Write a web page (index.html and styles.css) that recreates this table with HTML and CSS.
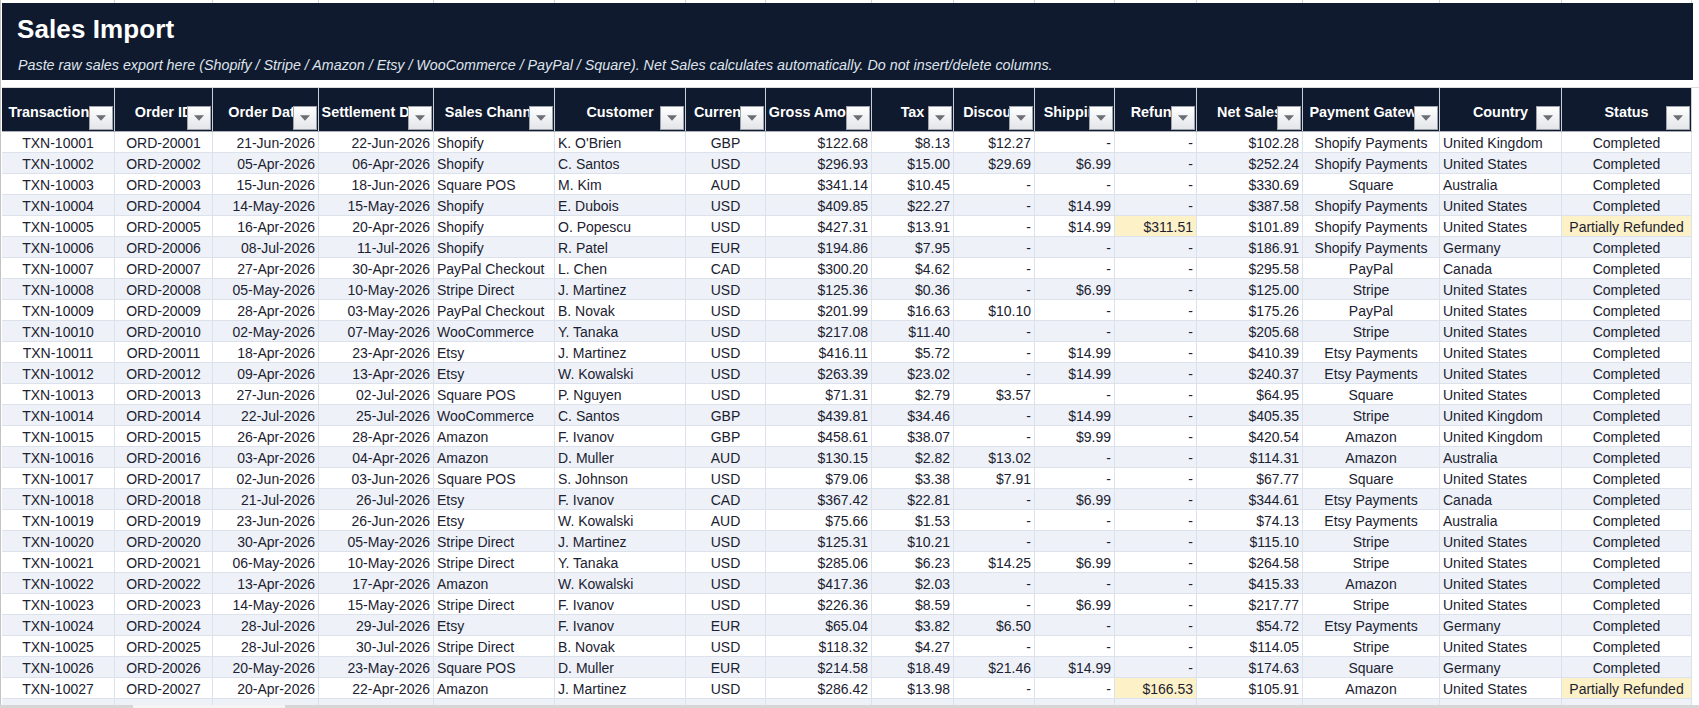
FILE: index.html
```html
<!DOCTYPE html>
<html lang="en">
<head>
<meta charset="utf-8">
<title>Sales Import</title>
<link rel="stylesheet" href="styles.css">
</head>
<body>
<div class="sheet">
  <div class="top-strip">
    <span></span><span></span><span></span><span></span><span></span><span></span><span></span><span></span><span></span><span></span><span></span><span></span><span></span><span></span><span></span><span></span>
  </div>
  <header class="banner">
    <h1 class="title">Sales Import</h1>
    <p class="subtitle">Paste raw sales export here (Shopify / Stripe / Amazon / Etsy / WooCommerce / PayPal / Square). Net Sales calculates automatically. Do not insert/delete columns.</p>
  </header>
  <div class="gap-strip"></div>
  <div class="grid">
    <div class="row head">
      <div class="hc"><span>Transaction ID</span><i class="fb"><svg viewBox="0 0 9 5"><polygon points="0,0 9,0 4.5,5"/></svg></i></div>
      <div class="hc"><span>Order ID</span><i class="fb"><svg viewBox="0 0 9 5"><polygon points="0,0 9,0 4.5,5"/></svg></i></div>
      <div class="hc"><span>Order Date</span><i class="fb"><svg viewBox="0 0 9 5"><polygon points="0,0 9,0 4.5,5"/></svg></i></div>
      <div class="hc"><span>Settlement Date</span><i class="fb"><svg viewBox="0 0 9 5"><polygon points="0,0 9,0 4.5,5"/></svg></i></div>
      <div class="hc"><span>Sales Channel</span><i class="fb"><svg viewBox="0 0 9 5"><polygon points="0,0 9,0 4.5,5"/></svg></i></div>
      <div class="hc"><span>Customer</span><i class="fb"><svg viewBox="0 0 9 5"><polygon points="0,0 9,0 4.5,5"/></svg></i></div>
      <div class="hc"><span>Currency</span><i class="fb"><svg viewBox="0 0 9 5"><polygon points="0,0 9,0 4.5,5"/></svg></i></div>
      <div class="hc"><span>Gross Amount</span><i class="fb"><svg viewBox="0 0 9 5"><polygon points="0,0 9,0 4.5,5"/></svg></i></div>
      <div class="hc"><span>Tax</span><i class="fb"><svg viewBox="0 0 9 5"><polygon points="0,0 9,0 4.5,5"/></svg></i></div>
      <div class="hc"><span>Discount</span><i class="fb"><svg viewBox="0 0 9 5"><polygon points="0,0 9,0 4.5,5"/></svg></i></div>
      <div class="hc"><span>Shipping</span><i class="fb"><svg viewBox="0 0 9 5"><polygon points="0,0 9,0 4.5,5"/></svg></i></div>
      <div class="hc"><span>Refund</span><i class="fb"><svg viewBox="0 0 9 5"><polygon points="0,0 9,0 4.5,5"/></svg></i></div>
      <div class="hc"><span>Net Sales</span><i class="fb"><svg viewBox="0 0 9 5"><polygon points="0,0 9,0 4.5,5"/></svg></i></div>
      <div class="hc"><span>Payment Gateway</span><i class="fb"><svg viewBox="0 0 9 5"><polygon points="0,0 9,0 4.5,5"/></svg></i></div>
      <div class="hc"><span>Country</span><i class="fb"><svg viewBox="0 0 9 5"><polygon points="0,0 9,0 4.5,5"/></svg></i></div>
      <div class="hc"><span>Status</span><i class="fb"><svg viewBox="0 0 9 5"><polygon points="0,0 9,0 4.5,5"/></svg></i></div>
    </div>
    <div class="body">
      <div class="row"><div class="c">TXN-10001</div><div class="c">ORD-20001</div><div class="r">21-Jun-2026</div><div class="r">22-Jun-2026</div><div class="l">Shopify</div><div class="l">K. O'Brien</div><div class="c">GBP</div><div class="r">$122.68</div><div class="r">$8.13</div><div class="r">$12.27</div><div class="r">-</div><div class="r">-</div><div class="r">$102.28</div><div class="c">Shopify Payments</div><div class="l">United Kingdom</div><div class="c">Completed</div></div>
      <div class="row"><div class="c">TXN-10002</div><div class="c">ORD-20002</div><div class="r">05-Apr-2026</div><div class="r">06-Apr-2026</div><div class="l">Shopify</div><div class="l">C. Santos</div><div class="c">USD</div><div class="r">$296.93</div><div class="r">$15.00</div><div class="r">$29.69</div><div class="r">$6.99</div><div class="r">-</div><div class="r">$252.24</div><div class="c">Shopify Payments</div><div class="l">United States</div><div class="c">Completed</div></div>
      <div class="row"><div class="c">TXN-10003</div><div class="c">ORD-20003</div><div class="r">15-Jun-2026</div><div class="r">18-Jun-2026</div><div class="l">Square POS</div><div class="l">M. Kim</div><div class="c">AUD</div><div class="r">$341.14</div><div class="r">$10.45</div><div class="r">-</div><div class="r">-</div><div class="r">-</div><div class="r">$330.69</div><div class="c">Square</div><div class="l">Australia</div><div class="c">Completed</div></div>
      <div class="row"><div class="c">TXN-10004</div><div class="c">ORD-20004</div><div class="r">14-May-2026</div><div class="r">15-May-2026</div><div class="l">Shopify</div><div class="l">E. Dubois</div><div class="c">USD</div><div class="r">$409.85</div><div class="r">$22.27</div><div class="r">-</div><div class="r">$14.99</div><div class="r">-</div><div class="r">$387.58</div><div class="c">Shopify Payments</div><div class="l">United States</div><div class="c">Completed</div></div>
      <div class="row"><div class="c">TXN-10005</div><div class="c">ORD-20005</div><div class="r">16-Apr-2026</div><div class="r">20-Apr-2026</div><div class="l">Shopify</div><div class="l">O. Popescu</div><div class="c">USD</div><div class="r">$427.31</div><div class="r">$13.91</div><div class="r">-</div><div class="r">$14.99</div><div class="r hl">$311.51</div><div class="r">$101.89</div><div class="c">Shopify Payments</div><div class="l">United States</div><div class="c hl">Partially Refunded</div></div>
      <div class="row"><div class="c">TXN-10006</div><div class="c">ORD-20006</div><div class="r">08-Jul-2026</div><div class="r">11-Jul-2026</div><div class="l">Shopify</div><div class="l">R. Patel</div><div class="c">EUR</div><div class="r">$194.86</div><div class="r">$7.95</div><div class="r">-</div><div class="r">-</div><div class="r">-</div><div class="r">$186.91</div><div class="c">Shopify Payments</div><div class="l">Germany</div><div class="c">Completed</div></div>
      <div class="row"><div class="c">TXN-10007</div><div class="c">ORD-20007</div><div class="r">27-Apr-2026</div><div class="r">30-Apr-2026</div><div class="l">PayPal Checkout</div><div class="l">L. Chen</div><div class="c">CAD</div><div class="r">$300.20</div><div class="r">$4.62</div><div class="r">-</div><div class="r">-</div><div class="r">-</div><div class="r">$295.58</div><div class="c">PayPal</div><div class="l">Canada</div><div class="c">Completed</div></div>
      <div class="row"><div class="c">TXN-10008</div><div class="c">ORD-20008</div><div class="r">05-May-2026</div><div class="r">10-May-2026</div><div class="l">Stripe Direct</div><div class="l">J. Martinez</div><div class="c">USD</div><div class="r">$125.36</div><div class="r">$0.36</div><div class="r">-</div><div class="r">$6.99</div><div class="r">-</div><div class="r">$125.00</div><div class="c">Stripe</div><div class="l">United States</div><div class="c">Completed</div></div>
      <div class="row"><div class="c">TXN-10009</div><div class="c">ORD-20009</div><div class="r">28-Apr-2026</div><div class="r">03-May-2026</div><div class="l">PayPal Checkout</div><div class="l">B. Novak</div><div class="c">USD</div><div class="r">$201.99</div><div class="r">$16.63</div><div class="r">$10.10</div><div class="r">-</div><div class="r">-</div><div class="r">$175.26</div><div class="c">PayPal</div><div class="l">United States</div><div class="c">Completed</div></div>
      <div class="row"><div class="c">TXN-10010</div><div class="c">ORD-20010</div><div class="r">02-May-2026</div><div class="r">07-May-2026</div><div class="l">WooCommerce</div><div class="l">Y. Tanaka</div><div class="c">USD</div><div class="r">$217.08</div><div class="r">$11.40</div><div class="r">-</div><div class="r">-</div><div class="r">-</div><div class="r">$205.68</div><div class="c">Stripe</div><div class="l">United States</div><div class="c">Completed</div></div>
      <div class="row"><div class="c">TXN-10011</div><div class="c">ORD-20011</div><div class="r">18-Apr-2026</div><div class="r">23-Apr-2026</div><div class="l">Etsy</div><div class="l">J. Martinez</div><div class="c">USD</div><div class="r">$416.11</div><div class="r">$5.72</div><div class="r">-</div><div class="r">$14.99</div><div class="r">-</div><div class="r">$410.39</div><div class="c">Etsy Payments</div><div class="l">United States</div><div class="c">Completed</div></div>
      <div class="row"><div class="c">TXN-10012</div><div class="c">ORD-20012</div><div class="r">09-Apr-2026</div><div class="r">13-Apr-2026</div><div class="l">Etsy</div><div class="l">W. Kowalski</div><div class="c">USD</div><div class="r">$263.39</div><div class="r">$23.02</div><div class="r">-</div><div class="r">$14.99</div><div class="r">-</div><div class="r">$240.37</div><div class="c">Etsy Payments</div><div class="l">United States</div><div class="c">Completed</div></div>
      <div class="row"><div class="c">TXN-10013</div><div class="c">ORD-20013</div><div class="r">27-Jun-2026</div><div class="r">02-Jul-2026</div><div class="l">Square POS</div><div class="l">P. Nguyen</div><div class="c">USD</div><div class="r">$71.31</div><div class="r">$2.79</div><div class="r">$3.57</div><div class="r">-</div><div class="r">-</div><div class="r">$64.95</div><div class="c">Square</div><div class="l">United States</div><div class="c">Completed</div></div>
      <div class="row"><div class="c">TXN-10014</div><div class="c">ORD-20014</div><div class="r">22-Jul-2026</div><div class="r">25-Jul-2026</div><div class="l">WooCommerce</div><div class="l">C. Santos</div><div class="c">GBP</div><div class="r">$439.81</div><div class="r">$34.46</div><div class="r">-</div><div class="r">$14.99</div><div class="r">-</div><div class="r">$405.35</div><div class="c">Stripe</div><div class="l">United Kingdom</div><div class="c">Completed</div></div>
      <div class="row"><div class="c">TXN-10015</div><div class="c">ORD-20015</div><div class="r">26-Apr-2026</div><div class="r">28-Apr-2026</div><div class="l">Amazon</div><div class="l">F. Ivanov</div><div class="c">GBP</div><div class="r">$458.61</div><div class="r">$38.07</div><div class="r">-</div><div class="r">$9.99</div><div class="r">-</div><div class="r">$420.54</div><div class="c">Amazon</div><div class="l">United Kingdom</div><div class="c">Completed</div></div>
      <div class="row"><div class="c">TXN-10016</div><div class="c">ORD-20016</div><div class="r">03-Apr-2026</div><div class="r">04-Apr-2026</div><div class="l">Amazon</div><div class="l">D. Muller</div><div class="c">AUD</div><div class="r">$130.15</div><div class="r">$2.82</div><div class="r">$13.02</div><div class="r">-</div><div class="r">-</div><div class="r">$114.31</div><div class="c">Amazon</div><div class="l">Australia</div><div class="c">Completed</div></div>
      <div class="row"><div class="c">TXN-10017</div><div class="c">ORD-20017</div><div class="r">02-Jun-2026</div><div class="r">03-Jun-2026</div><div class="l">Square POS</div><div class="l">S. Johnson</div><div class="c">USD</div><div class="r">$79.06</div><div class="r">$3.38</div><div class="r">$7.91</div><div class="r">-</div><div class="r">-</div><div class="r">$67.77</div><div class="c">Square</div><div class="l">United States</div><div class="c">Completed</div></div>
      <div class="row"><div class="c">TXN-10018</div><div class="c">ORD-20018</div><div class="r">21-Jul-2026</div><div class="r">26-Jul-2026</div><div class="l">Etsy</div><div class="l">F. Ivanov</div><div class="c">CAD</div><div class="r">$367.42</div><div class="r">$22.81</div><div class="r">-</div><div class="r">$6.99</div><div class="r">-</div><div class="r">$344.61</div><div class="c">Etsy Payments</div><div class="l">Canada</div><div class="c">Completed</div></div>
      <div class="row"><div class="c">TXN-10019</div><div class="c">ORD-20019</div><div class="r">23-Jun-2026</div><div class="r">26-Jun-2026</div><div class="l">Etsy</div><div class="l">W. Kowalski</div><div class="c">AUD</div><div class="r">$75.66</div><div class="r">$1.53</div><div class="r">-</div><div class="r">-</div><div class="r">-</div><div class="r">$74.13</div><div class="c">Etsy Payments</div><div class="l">Australia</div><div class="c">Completed</div></div>
      <div class="row"><div class="c">TXN-10020</div><div class="c">ORD-20020</div><div class="r">30-Apr-2026</div><div class="r">05-May-2026</div><div class="l">Stripe Direct</div><div class="l">J. Martinez</div><div class="c">USD</div><div class="r">$125.31</div><div class="r">$10.21</div><div class="r">-</div><div class="r">-</div><div class="r">-</div><div class="r">$115.10</div><div class="c">Stripe</div><div class="l">United States</div><div class="c">Completed</div></div>
      <div class="row"><div class="c">TXN-10021</div><div class="c">ORD-20021</div><div class="r">06-May-2026</div><div class="r">10-May-2026</div><div class="l">Stripe Direct</div><div class="l">Y. Tanaka</div><div class="c">USD</div><div class="r">$285.06</div><div class="r">$6.23</div><div class="r">$14.25</div><div class="r">$6.99</div><div class="r">-</div><div class="r">$264.58</div><div class="c">Stripe</div><div class="l">United States</div><div class="c">Completed</div></div>
      <div class="row"><div class="c">TXN-10022</div><div class="c">ORD-20022</div><div class="r">13-Apr-2026</div><div class="r">17-Apr-2026</div><div class="l">Amazon</div><div class="l">W. Kowalski</div><div class="c">USD</div><div class="r">$417.36</div><div class="r">$2.03</div><div class="r">-</div><div class="r">-</div><div class="r">-</div><div class="r">$415.33</div><div class="c">Amazon</div><div class="l">United States</div><div class="c">Completed</div></div>
      <div class="row"><div class="c">TXN-10023</div><div class="c">ORD-20023</div><div class="r">14-May-2026</div><div class="r">15-May-2026</div><div class="l">Stripe Direct</div><div class="l">F. Ivanov</div><div class="c">USD</div><div class="r">$226.36</div><div class="r">$8.59</div><div class="r">-</div><div class="r">$6.99</div><div class="r">-</div><div class="r">$217.77</div><div class="c">Stripe</div><div class="l">United States</div><div class="c">Completed</div></div>
      <div class="row"><div class="c">TXN-10024</div><div class="c">ORD-20024</div><div class="r">28-Jul-2026</div><div class="r">29-Jul-2026</div><div class="l">Etsy</div><div class="l">F. Ivanov</div><div class="c">EUR</div><div class="r">$65.04</div><div class="r">$3.82</div><div class="r">$6.50</div><div class="r">-</div><div class="r">-</div><div class="r">$54.72</div><div class="c">Etsy Payments</div><div class="l">Germany</div><div class="c">Completed</div></div>
      <div class="row"><div class="c">TXN-10025</div><div class="c">ORD-20025</div><div class="r">28-Jul-2026</div><div class="r">30-Jul-2026</div><div class="l">Stripe Direct</div><div class="l">B. Novak</div><div class="c">USD</div><div class="r">$118.32</div><div class="r">$4.27</div><div class="r">-</div><div class="r">-</div><div class="r">-</div><div class="r">$114.05</div><div class="c">Stripe</div><div class="l">United States</div><div class="c">Completed</div></div>
      <div class="row"><div class="c">TXN-10026</div><div class="c">ORD-20026</div><div class="r">20-May-2026</div><div class="r">23-May-2026</div><div class="l">Square POS</div><div class="l">D. Muller</div><div class="c">EUR</div><div class="r">$214.58</div><div class="r">$18.49</div><div class="r">$21.46</div><div class="r">$14.99</div><div class="r">-</div><div class="r">$174.63</div><div class="c">Square</div><div class="l">Germany</div><div class="c">Completed</div></div>
      <div class="row"><div class="c">TXN-10027</div><div class="c">ORD-20027</div><div class="r">20-Apr-2026</div><div class="r">22-Apr-2026</div><div class="l">Amazon</div><div class="l">J. Martinez</div><div class="c">USD</div><div class="r">$286.42</div><div class="r">$13.98</div><div class="r">-</div><div class="r">-</div><div class="r hl">$166.53</div><div class="r">$105.91</div><div class="c">Amazon</div><div class="l">United States</div><div class="c hl">Partially Refunded</div></div>
      <div class="row"><div></div><div></div><div></div><div></div><div></div><div></div><div></div><div></div><div></div><div></div><div></div><div></div><div></div><div></div><div></div><div></div></div>
    </div>
  </div>
</div>
<div class="hscroll"><span class="thumb"></span></div>
</body>
</html>
```

FILE: styles.css
```css
* { box-sizing: border-box; }

html, body {
  margin: 0;
  padding: 0;
  background: #ffffff;
  overflow: hidden;
}

body {
  width: 1699px;
  height: 708px;
  font-family: "Liberation Sans", Arial, sans-serif;
  color: #1b2130;
}

.sheet {
  border-left: 1px solid #c4c4c4;
  padding-left: 1px;
  width: 1699px;
}

.top-strip {
  display: grid;
  grid-template-columns: 113px 98px 106px 115px 121px 131px 80px 106px 82px 81px 80px 82px 106px 137px 122px 130px;
  height: 3px;
}
.top-strip span {
  border-right: 1px solid #d4d4d4;
}

.banner {
  width: 1691px;
  height: 77px;
  background: #0f1a2e;
  padding: 11px 0 0 15px;
  display: flex;
  flex-direction: column;
  gap: 12px;
}

.title {
  margin: 0;
  font-size: 26px;
  line-height: 30px;
  font-weight: 700;
  color: #ffffff;
  letter-spacing: 0.1px;
}

.subtitle {
  margin: 0;
  font-size: 14.3px;
  line-height: 18px;
  font-style: italic;
  color: #dfe3ec;
  padding-left: 1px;
}

.gap-strip {
  height: 8px;
  width: 1699px;
  border-bottom: 1px solid #dcdcdc;
}

.grid {
  width: 1690px;
}

.row {
  display: grid;
  grid-template-columns: 113px 98px 106px 115px 121px 131px 80px 106px 82px 81px 80px 82px 106px 137px 122px 130px;
  height: 21px;
}

.row.head {
  height: 44px;
  background: #0f1a2e;
  border-bottom: 1px solid #a9adb5;
}

.hc {
  position: relative;
  border-right: 1px solid #c9ced8;
  color: #ffffff;
  font-weight: 700;
  font-size: 14.4px;
  line-height: 38px;
  padding-top: 5px;
  text-align: center;
  white-space: nowrap;
  overflow: hidden;
  display: flex;
  justify-content: center;
}

.hc span {
  flex: none;
}

.fb {
  position: absolute;
  right: 1px;
  bottom: 1px;
  width: 24px;
  height: 24px;
  border: 1px solid #9ea3ab;
  background: linear-gradient(#ffffff, #e3e5e9);
  display: flex;
  align-items: center;
  justify-content: center;
}

.fb svg {
  width: 10px;
  height: 6px;
  fill: #6b6e74;
}

.body .row:nth-child(even) {
  background: #eef2f8;
}

.body .row > div {
  border-right: 1px solid #dce2eb;
  border-bottom: 1px solid #dce2eb;
  font-size: 14px;
  line-height: 20px;
  padding: 1px 3px 0;
  white-space: nowrap;
  overflow: hidden;
}

.body .c { text-align: center; }
.body .r { text-align: right; }
.body .l { text-align: left; padding-left: 2px; }

.body .row > .hl {
  background: #fdf1c7;
}

.hscroll {
  position: fixed;
  left: 0;
  bottom: 0;
  width: 1699px;
  height: 3px;
  background: #d6d6d6;
}

.hscroll .thumb {
  position: absolute;
  left: 133px;
  top: 0;
  width: 152px;
  height: 3px;
  background: #f4f4f4;
}
```
